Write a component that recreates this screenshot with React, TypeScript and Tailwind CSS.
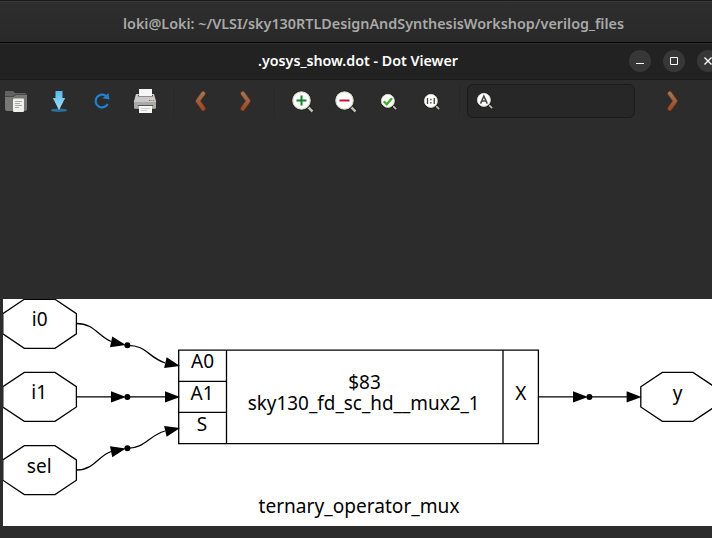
import type { ReactNode } from "react";

const UI_FONT = "font-['Noto_Sans','Open_Sans',sans-serif]";

function TerminalBar() {
  return (
    <div className="flex h-[42px] shrink-0 items-center border-t border-[#1a1a1a] bg-linear-to-b from-[#2e2e2e] to-[#292929] pl-[123px] pt-[5px] shadow-[inset_0_1px_0_#383838]">
      <svg width="503" height="24" className="block">
        <text x="0" y="17" textLength="501" lengthAdjust="spacingAndGlyphs" className="fill-[#a9a9a7] font-['Noto_Sans',sans-serif] text-[14px] font-semibold">
          loki@Loki: ~/VLSI/sky130RTLDesignAndSynthesisWorkshop/verilog_files
        </text>
      </svg>
    </div>
  );
}

function WindowButton({ children }: { children: ReactNode }) {
  return (
    <div className="flex size-[22px] shrink-0 items-center justify-center rounded-full bg-[#373737]">
      <svg width="22" height="22" viewBox="0 0 22 22" fill="none" stroke="#fff" strokeWidth="1">
        {children}
      </svg>
    </div>
  );
}

function TitleBar() {
  return (
    <div className="flex h-[38px] shrink-0 items-center border-t border-black bg-[#222222] pl-[258px] shadow-[inset_0_1px_0_#303030,inset_0_-1px_0_#1c1c1c]">
      <svg width="202" height="24" className="mr-[169px] block shrink-0">
        <text x="0" y="16" textLength="200" lengthAdjust="spacingAndGlyphs" className="fill-white font-['Noto_Sans',sans-serif] text-[14px] font-semibold">
          .yosys_show.dot - Dot Viewer
        </text>
      </svg>
      <div className="mb-0.5 flex gap-3">
        <WindowButton>
          <path d="M7 13.5h8" />
        </WindowButton>
        <WindowButton>
          <path d="M7.5 7.5h7v7h-7z" />
        </WindowButton>
        <WindowButton>
          <path d="M7.5 7.5l7 7m0-7l-7 7" strokeWidth="1.4" />
        </WindowButton>
      </div>
    </div>
  );
}

function Chevron({ flip = false }: { flip?: boolean }) {
  return (
    <svg width="14" height="24" viewBox="0 0 14 24" className={flip ? "block -scale-x-100" : "block"} fill="none" strokeLinecap="round" strokeLinejoin="round">
      <defs>
        <linearGradient id={flip ? "copperL" : "copperR"} x1="0" y1="0" x2="0" y2="1">
          <stop offset="0" stopColor="#9c7653" />
          <stop offset="1" stopColor="#a04b2a" />
        </linearGradient>
      </defs>
      <path d="M3.8 4.5l5.4 7.5-5.4 7.5" stroke="#6b3320" strokeWidth="5" />
      <path d="M3.8 4.5l5.4 7.5-5.4 7.5" stroke={flip ? "url(#copperL)" : "url(#copperR)"} strokeWidth="3.8" />
    </svg>
  );
}

function Magnifier({ size, children }: { size: number; children: ReactNode }) {
  return (
    <svg width={size} height={size} viewBox="0 0 24 24" className="block">
      <path d="M16 16l5.5 5.5" stroke="#151515" strokeWidth="4.4" />
      <path d="M16.5 16.5l5 5" stroke="#bdbdb3" strokeWidth="2.5" />
      <circle cx="10.5" cy="10.5" r="10" fill="#1b1b18" />
      <circle cx="10.5" cy="10.5" r="8.7" fill="#fff" stroke="#d8d8ca" strokeWidth="1.2" />
      {children}
    </svg>
  );
}

function FolderIcon() {
  return (
    <svg width="24" height="24" viewBox="0 0 24 24" className="block">
      <path d="M1 3q0-1 1-1h7l2 2h10q1 0 1 1v15H1z" fill="#626262" />
      <path d="M1 8h8l3-2h11v14q0 2-2 2H3q-2 0-2-2z" fill="#777" />
      <path d="M1 7.5h8l3-2h11" fill="none" stroke="#494949" />
      <rect x="9" y="9.5" width="11" height="13.5" rx="1" fill="#efefed" />
      <path d="M11 12.5h7M11 14.5h5M11 16.5h7M11 18.5h4" stroke="#aaa9a4" />
    </svg>
  );
}

function SaveIcon() {
  return (
    <svg width="18" height="24" viewBox="0 0 18 24" className="block">
      <defs>
        <linearGradient id="save" x1="0" y1="0" x2="0" y2="1">
          <stop offset="0" stopColor="#55b9ea" />
          <stop offset="1" stopColor="#a5e0fa" />
        </linearGradient>
      </defs>
      <ellipse cx="9" cy="21.3" rx="8.2" ry="1.7" fill="#286f99" />
      <path d="M5.5 2h7v7h2.7L9 21 2.8 9h2.7z" fill="url(#save)" />
    </svg>
  );
}

function ReloadIcon() {
  return (
    <svg width="18" height="18" viewBox="0 0 18 18" className="block">
      <path d="M13.3 4.2A6.4 6.4 0 1 0 14.7 12" fill="none" stroke="#2181d3" strokeWidth="2.2" />
      <path d="M15.5 1l1 6.5-7-1.2z" fill="#2181d3" />
    </svg>
  );
}

function PrintIcon() {
  return (
    <svg width="24" height="26" viewBox="0 0 24 26" className="block">
      <path d="M3 6h18l2 7v6.5q0 1-1 1H2q-1 0-1-1V13z" fill="#c9c9c9" />
      <path d="M1 14h22v5.5q0 1-1 1H2q-1 0-1-1z" fill="#a9a9a9" />
      <rect x="5" y="7" width="15" height="1.5" fill="#555" />
      <rect x="6" y="1" width="13" height="7" fill="#f6f6f6" />
      <path d="M5 17.5h15" stroke="#555" />
      <rect x="6" y="18" width="13" height="7" fill="#f5f5f3" />
      <path d="M8 20.5h9M8 22.5h6" stroke="#ccc" />
      <path d="M16 12.5h1.3" stroke="#d84b39" />
      <path d="M18 12.5h1.3" stroke="#e98c38" />
      <path d="M20 12.5h1.3" stroke="#64a83b" />
    </svg>
  );
}

function Separator() {
  return <div className="h-[33px] w-px shrink-0 bg-[#282828]" />;
}

function Toolbar() {
  return (
    <div className="flex h-[42px] shrink-0 items-center bg-[#2c2c2c] pl-1">
      <FolderIcon />
      <div className="ml-[22px]"><SaveIcon /></div>
      <div className="ml-[25px]"><ReloadIcon /></div>
      <div className="ml-[22px]"><PrintIcon /></div>
      <div className="ml-4"><Separator /></div>
      <div className="ml-[19px]"><Chevron flip /></div>
      <div className="ml-[32px]"><Chevron /></div>
      <div className="ml-[21px]"><Separator /></div>
      <div className="ml-[16px] mt-0.5">
        <Magnifier size={24}>
          <path d="M10.5 5.5v10M5.5 10.5h10" stroke="#0f8428" strokeWidth="2" />
        </Magnifier>
      </div>
      <div className="ml-[19px] mt-0.5">
        <Magnifier size={24}>
          <path d="M5.5 10.5h10" stroke="#c7122f" strokeWidth="2" />
        </Magnifier>
      </div>
      <div className="ml-[22px] mt-px">
        <Magnifier size={18}>
          <path d="M5 11l4 4 7-8" fill="none" stroke="#3fae29" strokeWidth="3" />
        </Magnifier>
      </div>
      <div className="ml-[25px] mt-px">
        <Magnifier size={18}>
          <path d="M6 6.5v8M15 6.5v8M10.5 7.5v2M10.5 12v2" stroke="#3b3b3b" strokeWidth="1.7" />
        </Magnifier>
      </div>
      <div className="ml-[18px]"><Separator /></div>
      <div className="ml-[7px] flex h-[34px] w-[168px] shrink-0 items-center rounded-md border border-[#1a1a1a] bg-[#272727] pl-2">
        <Magnifier size={18}>
          <path d="M6 15.5l4.5-10 4.5 10M7.7 12h5.6" fill="none" stroke="#444" strokeWidth="2" />
        </Magnifier>
      </div>
      <div className="ml-[31px]"><Chevron /></div>
    </div>
  );
}

function Arrow({ x, y, angle = 0 }: { x: number; y: number; angle?: number }) {
  return <path d="M0 0L-15 -5.6V5.6Z" fill="#000" transform={`translate(${x} ${y}) rotate(${angle})`} />;
}

function Port({ x, y }: { x: number; y: number }) {
  return <path d="M0 14.3L21.5 0H52.2L73.6 14.3V34.6L52.2 49H21.5L0 34.6Z" transform={`translate(${x} ${y})`} fill="#fff" />;
}

function Graph() {
  return (
    <svg width="709" height="227" viewBox="3 299 709 227" className="block bg-white">
      <g fill="none" stroke="#000" strokeWidth="1.3">
        <Port x={2.8} y={299.3} />
        <Port x={2.8} y={372.4} />
        <Port x={2.8} y={445.6} />
        <Port x={640.8} y={372.4} />
        <path d="M76.5 323.5C94 323.5 98 336 111 341.5" />
        <path d="M127 345.3C146 345 148 357 165 363" />
        <path d="M76.5 396.9H112M127 396.9H166" />
        <path d="M76.5 470C94 470 98 456 111 451.5" />
        <path d="M127 448.3C146 448 148 436 165 431" />
        <path d="M538.4 396.9H574M589 396.9H627" />
        <path d="M178.7 350.2H538.4V443.6H178.7ZM226.5 350.2V443.6M503 350.2V443.6M178.7 381.3H226.5M178.7 412.4H226.5" />
      </g>
      <Arrow x={125.8} y={345} angle={12} />
      <Arrow x={126} y={396.9} />
      <Arrow x={125.8} y={448.6} angle={-12} />
      <Arrow x={180} y={366} angle={13} />
      <Arrow x={180} y={396.9} />
      <Arrow x={180} y={428} angle={-13} />
      <Arrow x={588} y={396.9} />
      <Arrow x={641.6} y={396.9} />
      <circle cx="127.4" cy="345.3" r="3" />
      <circle cx="127.4" cy="396.9" r="3" />
      <circle cx="127.4" cy="448.3" r="3" />
      <circle cx="589.4" cy="396.9" r="3" />
      <g textAnchor="middle" className="fill-black font-['Noto_Sans',sans-serif] text-[19px]">
        <text x="39.7" y="326">i0</text>
        <text x="39.2" y="399.4">i1</text>
        <text x="39.2" y="472.5">sel</text>
        <text x="202.5" y="368">A0</text>
        <text x="202" y="399.5">A1</text>
        <text x="202" y="430.6">S</text>
        <text x="364.5" y="389">$83</text>
        <text x="363.7" y="409.6" textLength="232" lengthAdjust="spacingAndGlyphs">sky130_fd_sc_hd__mux2_1</text>
        <text x="520.7" y="399.5">X</text>
        <text x="677.5" y="399.5">y</text>
        <text x="359" y="512.5" textLength="201" lengthAdjust="spacingAndGlyphs">ternary_operator_mux</text>
      </g>
    </svg>
  );
}

export default function App() {
  return (
    <div className={`flex h-[538px] w-[712px] flex-col overflow-hidden bg-[#2c2c2c] ${UI_FONT}`}>
      <TerminalBar />
      <TitleBar />
      <Toolbar />
      <main className="flex flex-1 flex-col pl-[3px] pt-[177px]">
        <Graph />
      </main>
    </div>
  );
}
